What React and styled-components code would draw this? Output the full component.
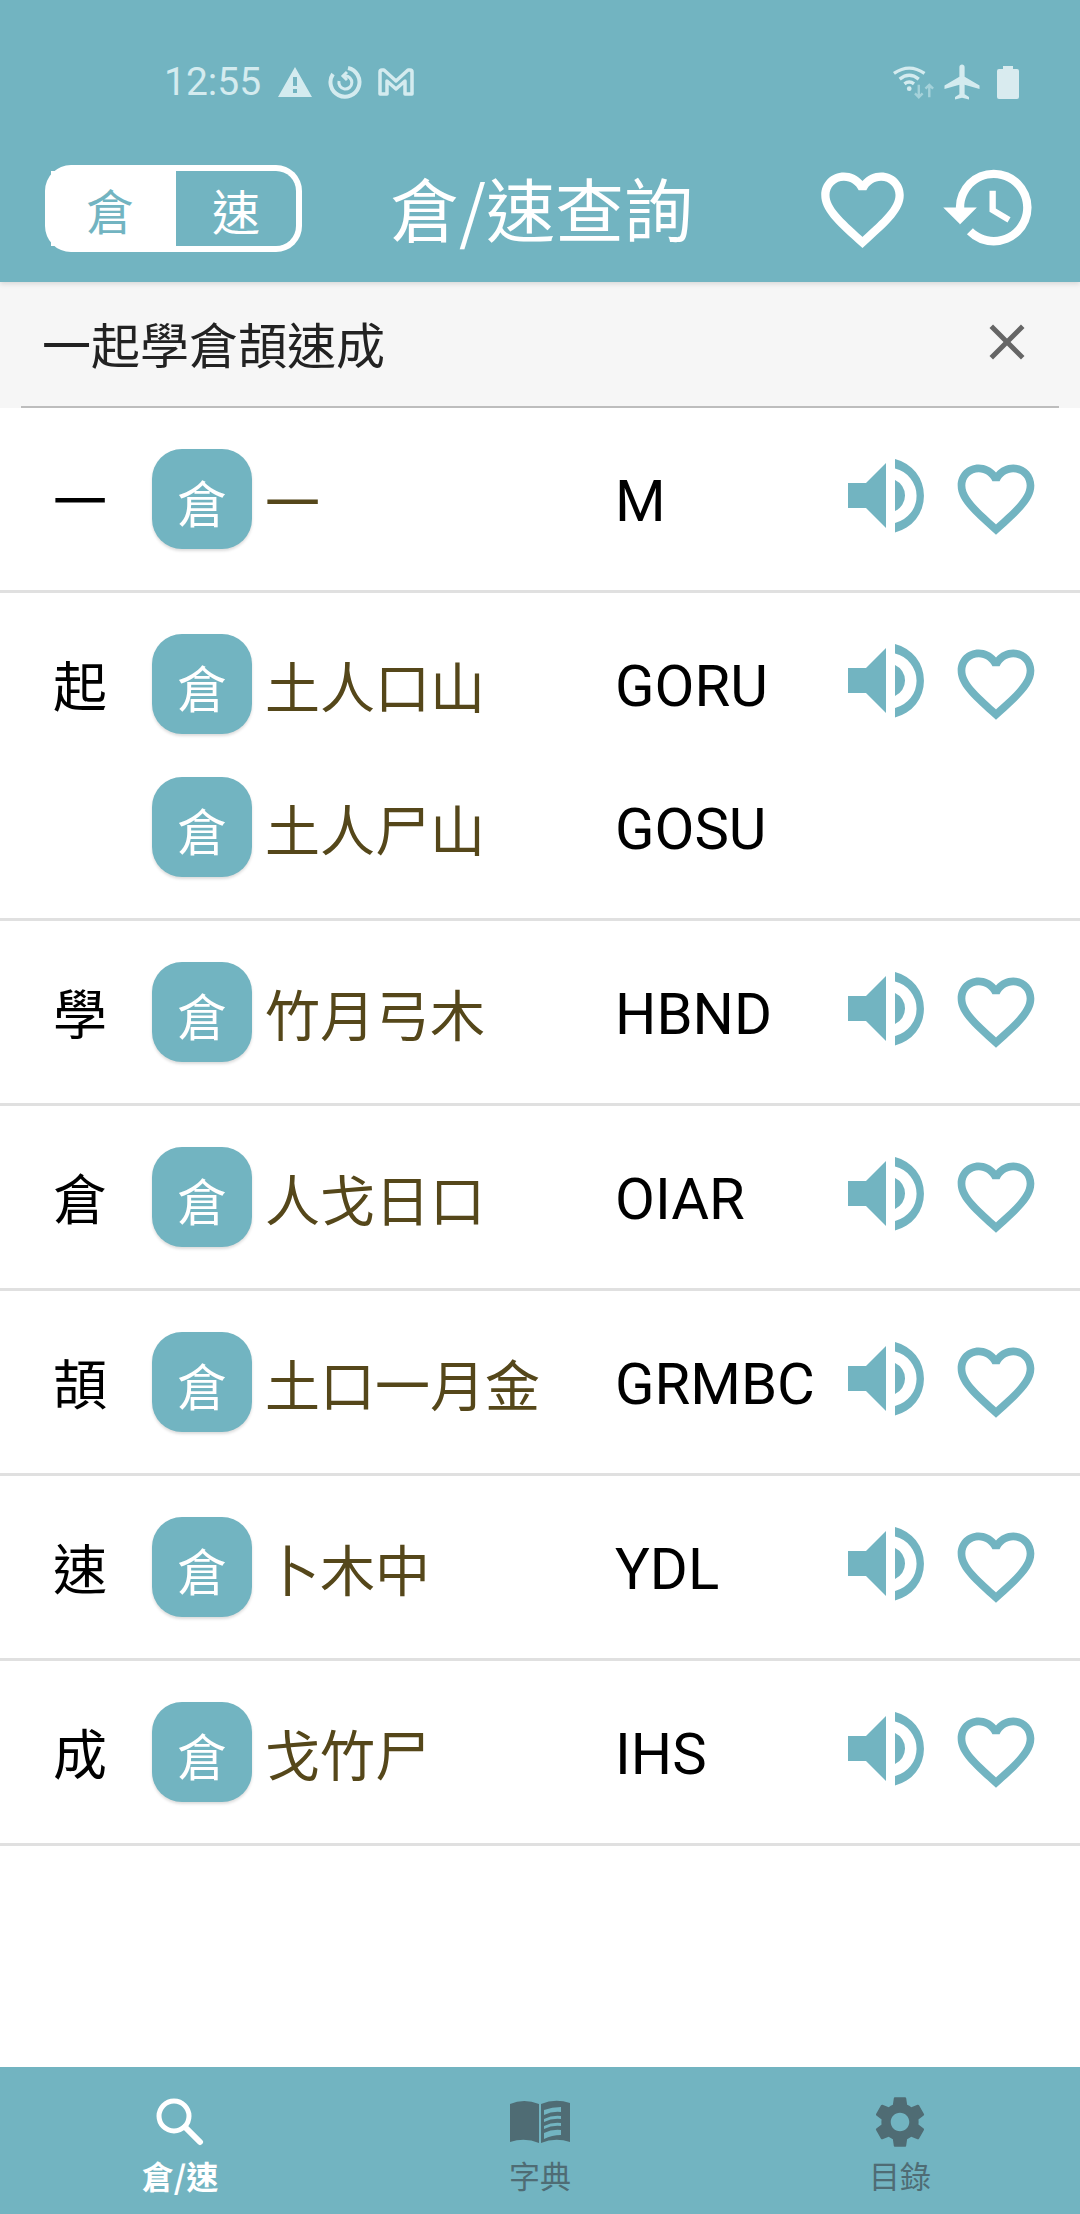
import styled, { createGlobalStyle } from "styled-components";
import { MdHistory, MdFavoriteBorder, MdClose, MdSettings, MdAirplanemodeActive } from "react-icons/md";

const TEAL = "#72b4c1";

const entries = [
  { ch: "一", lines: [{ parts: "一", code: "M" }] },
  { ch: "起", lines: [{ parts: "土人口山", code: "GORU" }, { parts: "土人尸山", code: "GOSU" }] },
  { ch: "學", lines: [{ parts: "竹月弓木", code: "HBND" }] },
  { ch: "倉", lines: [{ parts: "人戈日口", code: "OIAR" }] },
  { ch: "頡", lines: [{ parts: "土口一月金", code: "GRMBC" }] },
  { ch: "速", lines: [{ parts: "卜木中", code: "YDL" }] },
  { ch: "成", lines: [{ parts: "戈竹尸", code: "IHS" }] },
];

const GlobalStyle = createGlobalStyle`
  html, body {
    margin: 0;
    padding: 0;
    background: #fff;
  }
  * {
    box-sizing: border-box;
  }
`;

const Page = styled.div`
  width: 1080px;
  height: 2214px;
  display: flex;
  flex-direction: column;
  font-family: "Noto Sans CJK TC", "Noto Sans CJK SC", sans-serif;
  overflow: hidden;
`;

const Header = styled.header`
  height: 282px;
  background: ${TEAL};
  display: flex;
  flex-direction: column;
  position: relative;
  z-index: 1;
  box-shadow: 0 2px 5px rgba(0, 0, 0, 0.12);
`;

const StatusBar = styled.div`
  height: 165px;
  padding: 59px 61px 0 164px;
  display: flex;
  align-items: flex-start;
  color: #d4ebef;
`;

const Time = styled.span`
  font-family: Roboto, sans-serif;
  font-size: 39px;
  line-height: 46px;
  margin-right: 17px;
`;

const StatusIcons = styled.div`
  display: flex;
  align-items: center;
  gap: ${(props) => props.gap}px;
  height: 46px;
  margin-left: ${(props) => (props.end ? "auto" : "0")};
`;

const TitleBar = styled.div`
  display: flex;
  align-items: flex-start;
  padding-left: 45px;
`;

const Toggle = styled.div`
  width: 257px;
  height: 87px;
  display: flex;
  background: #fff;
  border-radius: 26px;
  padding: 6px;
`;

const ToggleItem = styled.div`
  flex: ${(props) => (props.active ? "0 0 125px" : "1")};
  display: flex;
  align-items: center;
  justify-content: center;
  font-size: 48px;
  padding-right: ${(props) => (props.active ? "7px" : "0")};
  color: ${(props) => (props.active ? TEAL : "#fff")};
  background: ${(props) => (props.active ? "#fff" : TEAL)};
  border-radius: ${(props) => (props.active ? "0" : "0 20px 20px 0")};
`;

const Title = styled.h1`
  margin: -8px 0 0 88px;
  width: 430px;
  font-size: 69px;
  line-height: 100px;
  font-weight: 400;
  color: #fff;
`;

const HeaderIcon = styled.div`
  display: flex;
  color: #fff;
  margin-top: ${(props) => props.top}px;
  margin-left: ${(props) => props.left}px;
`;

const SearchBar = styled.div`
  height: 126px;
  background: #f6f6f6;
  padding: 0 21px;
`;

const SearchInner = styled.div`
  height: 126px;
  border-bottom: 2px solid #bdbdbd;
  display: flex;
  align-items: center;
  justify-content: space-between;
  padding: 0 22px 4px 21px;
  font-size: 49px;
  color: #222;
`;

const List = styled.main`
  flex: 1;
  background: #fff;
`;

const Row = styled.div`
  display: flex;
  padding: 41px 0 41px 53px;
  border-bottom: 3px solid #e0e0e0;
`;

const Char = styled.div`
  width: 99px;
  height: 100px;
  font-size: 54px;
  line-height: 100px;
  color: #000;
`;

const Lines = styled.div`
  flex: 1;
  display: flex;
  flex-direction: column;
  gap: 43px;
`;

const Line = styled.div`
  display: flex;
  align-items: flex-start;
  height: 100px;
`;

const Badge = styled.div`
  width: 100px;
  height: 100px;
  flex: none;
  border-radius: 30px;
  background: ${TEAL};
  color: #fff;
  font-size: 50px;
  display: flex;
  align-items: center;
  justify-content: center;
  padding-top: 4px;
  box-shadow: 0 2px 3px rgba(0, 0, 0, 0.14);
`;

const Parts = styled.div`
  width: 363px;
  padding-left: 13px;
  font-size: 55px;
  line-height: 100px;
  color: #55471a;
`;

const Code = styled.div`
  width: 233px;
  font-family: Roboto, sans-serif;
  font-size: 58px;
  line-height: 104px;
  color: #000;
`;

const Actions = styled.div`
  display: flex;
  align-items: flex-start;
  color: ${TEAL};
  padding-top: 10px;
`;

const HeartSlot = styled.div`
  display: flex;
  margin: -6px 0 0 26px;
`;

const BottomNav = styled.nav`
  height: 147px;
  background: ${TEAL};
  display: grid;
  grid-template-columns: repeat(3, 1fr);
`;

const NavItem = styled.div`
  display: flex;
  flex-direction: column;
  align-items: center;
  padding-top: 26px;
  color: ${(props) => (props.active ? "#fff" : "#4f6c74")};
`;

const NavIcon = styled.div`
  height: 58px;
  display: flex;
  align-items: center;
  justify-content: center;
`;

const NavLabel = styled.span`
  font-size: ${(props) => (props.active ? 32 : 31)}px;
  line-height: 42px;
  margin-top: 3px;
  font-weight: ${(props) => (props.active ? 700 : 400)};
`;

const BatterySlot = styled.div`
  display: flex;
  margin-left: 8px;
`;

const WarningIcon = () => (
  <svg width="34" height="30" viewBox="0 0 34 30">
    <path fill="currentColor" fillRule="evenodd" d="M17 0L34 30H0ZM15 10V19H19V10ZM15 22V26H19V22Z" />
  </svg>
);

const SyncIcon = () => (
  <svg width="34" height="34" viewBox="0 0 34 34" fill="none" stroke="currentColor" strokeWidth="4">
    <path d="M20 3A14.500 14.500 0 1 1 5 9" />
    <path d="M11 16A6.500 6.500 0 1 0 17 11" strokeWidth="3" />
    <path d="M19 7L15 11L19 15" strokeWidth="3" />
  </svg>
);

const GmailIcon = () => (
  <svg width="36" height="28" viewBox="0 0 36 28" fill="none" stroke="currentColor" strokeWidth="3.500" strokeLinejoin="round">
    <path d="M2 26V4Q2 2 4 2H6L18 13L30 2H32Q34 2 34 4V26H27V13L18 21L9 13V26Z" />
  </svg>
);

const WifiIcon = () => (
  <svg width="42" height="34" viewBox="0 0 44 34" fill="none" stroke="#d4ebef" strokeWidth="3.500">
    <path d="M1 8Q17 -3 33 8" />
    <path d="M7 14Q17 6 27 14" />
    <path d="M12 19Q17 15 22 19" />
    <circle cx="17" cy="24" r="2.500" fill="#d4ebef" stroke="none" />
    <path d="M27 20V33M23 29L27 33L31 29" stroke="#a5d2da" strokeWidth="2.500" />
    <path d="M38 33V20M34 24L38 20L42 24" stroke="#a5d2da" strokeWidth="2.500" />
  </svg>
);

const BatteryIcon = () => (
  <svg width="22" height="33" viewBox="0 0 22 33">
    <path fill="#d9ebef" d="M6 0H16V3H20Q22 3 22 5V31Q22 33 20 33H2Q0 33 0 31V5Q0 3 2 3H6Z" />
  </svg>
);

const SpeakerIcon = () => (
  <svg width="76" height="74" viewBox="0 0 76 74">
    <path
      fill="currentColor"
      d="M0 24H18L38 4V69L18 49H0ZM47 21A17 17 0 0 1 47 52ZM47 0A37.800 37.800 0 0 1 47 73.500V64A28 28 0 0 0 47 9.500Z"
    />
  </svg>
);

const SearchIcon = () => (
  <svg width="48" height="48" viewBox="0 0 48 48" fill="none" stroke="currentColor">
    <circle cx="18" cy="18" r="15" strokeWidth="5" />
    <path d="M29 29L44 44" strokeWidth="6" strokeLinecap="round" />
  </svg>
);

const BookIcon = () => (
  <svg width="60" height="44" viewBox="0 0 60 44">
    <path
      fill="currentColor"
      fillRule="evenodd"
      d="M0 4Q14 -2 29 4V43Q15 37 0 42ZM31 4Q45 -2 60 3V42Q45 37 31 43ZM34 10V39Q42 35 51 35V7Q42 7 34 10Z"
    />
    <path
      fill="currentColor"
      d="M34 15Q42 11 51 12V16Q42 15 34 19ZM34 22Q42 18 51 19V23Q42 22 34 26ZM34 29Q42 25 51 26V30Q42 29 34 33Z"
    />
  </svg>
);

const App = () => {
  return (
    <Page>
      <GlobalStyle />
      <Header>
        <StatusBar>
          <Time>12:55</Time>
          <StatusIcons gap={16}>
            <WarningIcon />
            <SyncIcon />
            <GmailIcon />
          </StatusIcons>
          <StatusIcons end gap={6}>
            <WifiIcon />
            <MdAirplanemodeActive size={42} />
            <BatterySlot><BatteryIcon /></BatterySlot>
          </StatusIcons>
        </StatusBar>
        <TitleBar>
          <Toggle>
            <ToggleItem active>倉</ToggleItem>
            <ToggleItem>速</ToggleItem>
          </Toggle>
          <Title>倉/速查詢</Title>
          <HeaderIcon top={-5} left={-7}>
            <MdFavoriteBorder size={99} />
          </HeaderIcon>
          <HeaderIcon top={-8} left={27}>
            <MdHistory size={101} />
          </HeaderIcon>
        </TitleBar>
      </Header>
      <SearchBar>
        <SearchInner>
          一起學倉頡速成
          <MdClose size={60} color="#666" />
        </SearchInner>
      </SearchBar>
      <List>
        {entries.map((entry) => (
          <Row key={entry.ch}>
            <Char>{entry.ch}</Char>
            <Lines>
              {entry.lines.map((line, i) => (
                <Line key={line.code}>
                  <Badge>倉</Badge>
                  <Parts>{line.parts}</Parts>
                  <Code>{line.code}</Code>
                  {i === 0 && (
                    <Actions>
                      <SpeakerIcon />
                      <HeartSlot>
                        <MdFavoriteBorder size={92} />
                      </HeartSlot>
                    </Actions>
                  )}
                </Line>
              ))}
            </Lines>
          </Row>
        ))}
      </List>
      <BottomNav>
        <NavItem active>
          <NavIcon><SearchIcon /></NavIcon>
          <NavLabel active>倉/速</NavLabel>
        </NavItem>
        <NavItem>
          <NavIcon><BookIcon /></NavIcon>
          <NavLabel>字典</NavLabel>
        </NavItem>
        <NavItem>
          <NavIcon><MdSettings size={62} /></NavIcon>
          <NavLabel>目錄</NavLabel>
        </NavItem>
      </BottomNav>
    </Page>
  );
};

export default App;
